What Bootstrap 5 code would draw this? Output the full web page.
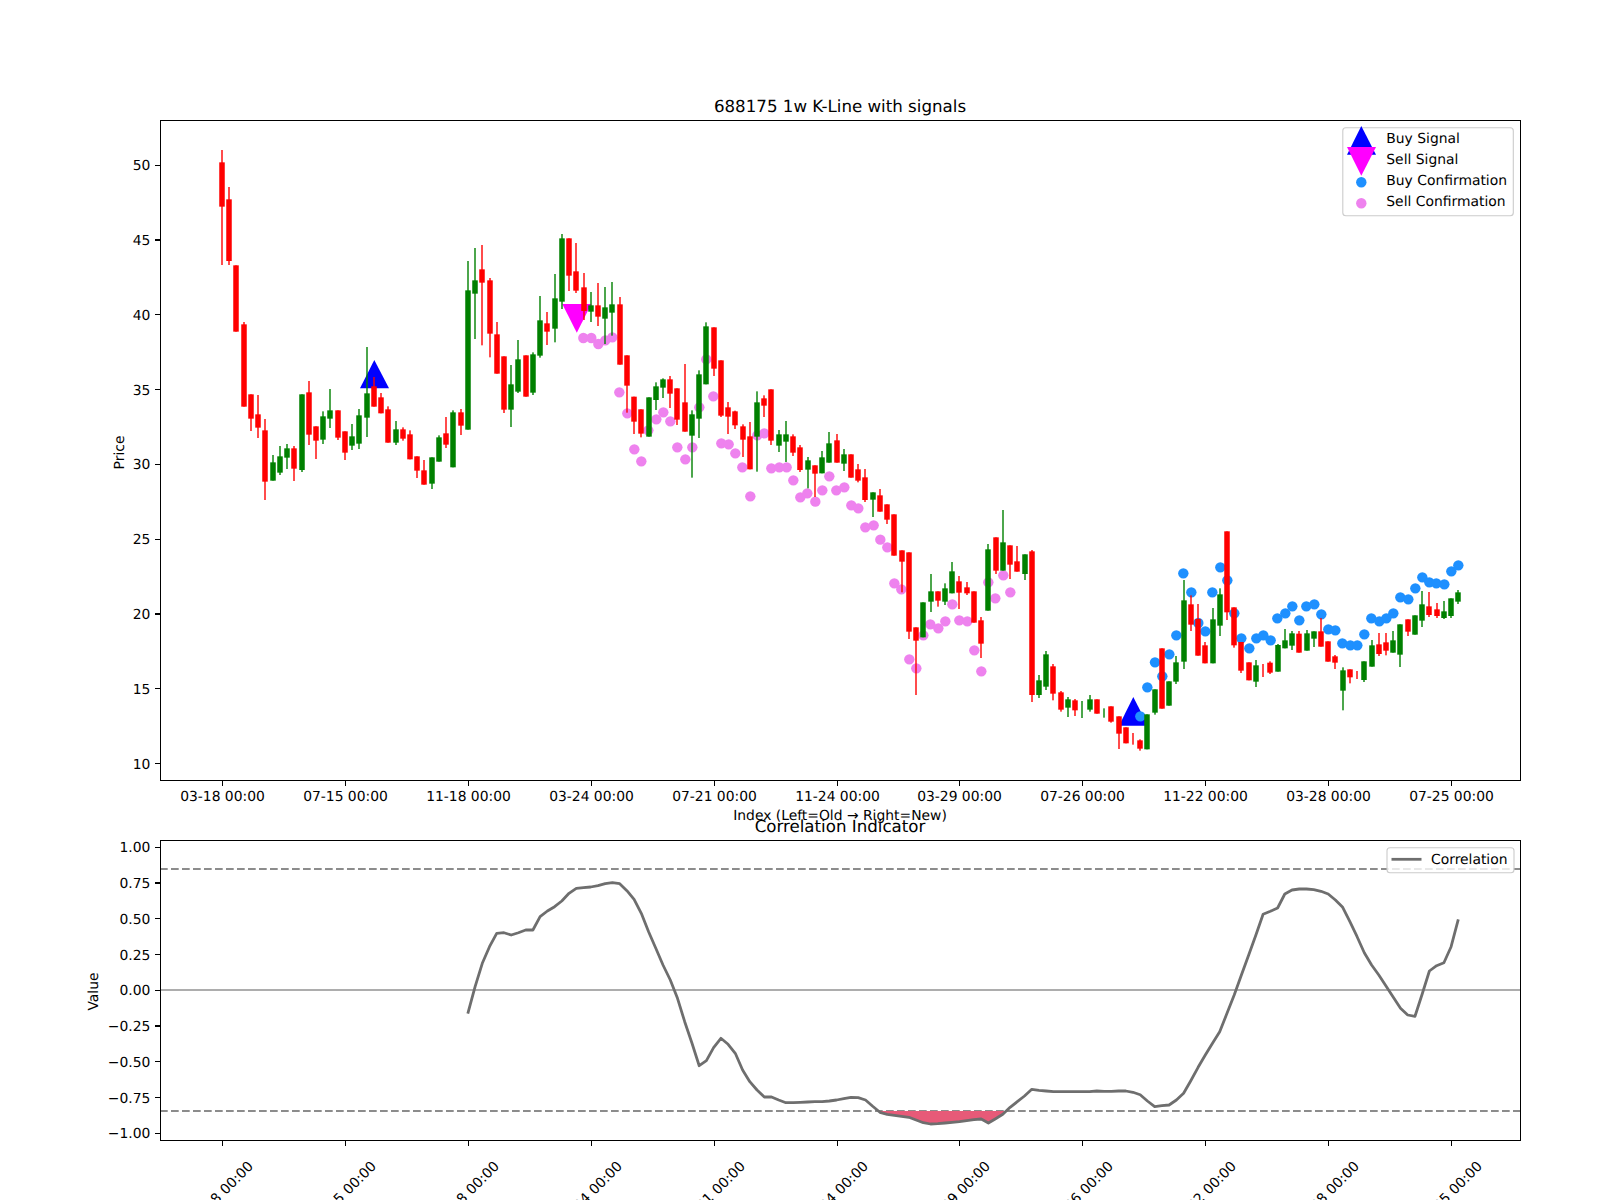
<!DOCTYPE html>
<html lang="en">
<head>
<meta charset="utf-8">
<title>688175 1w K-Line with signals</title>
<link href="https://cdn.jsdelivr.net/npm/bootstrap@5.3.0/dist/css/bootstrap.min.css" rel="stylesheet">
<style>
html,body{background:#fff;overflow:hidden}
.figure-sheet{width:1600px;height:1200px}
.figure-sheet svg{display:block}
.figure-sheet text{text-rendering:geometricPrecision}
.plot-text{font-family:"DejaVu Sans","Liberation Sans",sans-serif;font-size:13.89px;fill:#000}
.plot-title{font-family:"DejaVu Sans","Liberation Sans",sans-serif;font-size:16.67px;fill:#000}
.plot-frame{fill:none;stroke:#000;stroke-width:1.11;shape-rendering:crispEdges}
.plot-tick{stroke:#000;stroke-width:1.11;shape-rendering:crispEdges}
.legend-box{fill:#fff;fill-opacity:.8;stroke:#ccc;stroke-width:1.11}
.corr-line{fill:none;stroke:#6e6e6e;stroke-width:2.78;stroke-linejoin:round}
.corr-fill{fill:#e75a78}
.level-line{stroke:#8c8c8c;stroke-width:2.08;stroke-dasharray:7.7 3.3}
.zero-line{stroke:#adadad;stroke-width:2.08}
</style>
</head>
<body class="m-0 bg-white">
<main class="figure-sheet d-flex">
<svg id="chart" width="1600" height="1200" viewBox="0 0 1600 1200" xmlns="http://www.w3.org/2000/svg">
  <text class="plot-title" x="840" y="111.7" text-anchor="middle">688175 1w K-Line with signals</text>
  <polygon fill="#0000ff" points="374.3,360 360,388.3 389,388.3"/>
  <polygon fill="#0000ff" points="1133.3,697 1119,725.7 1148,725.7"/>
  <polygon fill="#ff00ff" points="562.3,304 591.3,304 576.8,332.7"/>
  <g id="dots"></g>
  <g id="bars"></g>
  <rect class="plot-frame" x="160.5" y="120.5" width="1360" height="660"/>
  <g id="topAxis"></g>
  <text class="plot-text" x="840" y="820" text-anchor="middle">Index (Left=Old → Right=New)</text>
  <text class="plot-text" text-anchor="middle" transform="translate(124,452.5) rotate(-90)">Price</text>

  <rect class="legend-box" x="1342.8" y="127.8" width="170.5" height="88" rx="3"/>
  <polygon fill="#0000ff" points="1361.3,126 1347,154.7 1376,154.7"/>
  <polygon fill="#ff00ff" points="1347,147 1376,147 1361.3,175.7"/>
  <circle cx="1361.3" cy="182.3" r="5.2" fill="#1e90ff"/>
  <circle cx="1361.3" cy="203.3" r="5.2" fill="#ee82ee"/>
  <text class="plot-text" x="1386.3" y="143.3">Buy Signal</text>
  <text class="plot-text" x="1386.3" y="164.2">Sell Signal</text>
  <text class="plot-text" x="1386.3" y="185.2">Buy Confirmation</text>
  <text class="plot-text" x="1386.3" y="206">Sell Confirmation</text>

  <text class="plot-title" x="840" y="831.7" text-anchor="middle">Correlation Indicator</text>
  <line class="level-line" x1="160" x2="1520" y1="869" y2="869"/>
  <line class="level-line" x1="160" x2="1520" y1="1111" y2="1111"/>
  <line class="zero-line" x1="160" x2="1520" y1="990" y2="990"/>
  <polygon id="corrFill" class="corr-fill"/>
  <polyline id="corrLine" class="corr-line"/>
  <rect class="plot-frame" x="160.5" y="840.5" width="1360" height="300"/>
  <g id="lowAxis"></g>
  <text class="plot-text" text-anchor="middle" transform="translate(98,991.5) rotate(-90)">Value</text>
  <rect class="legend-box" x="1387" y="847.8" width="127" height="25" rx="3"/>
  <line x1="1391.5" x2="1421.5" y1="859.3" y2="859.3" stroke="#6e6e6e" stroke-width="2.78"/>
  <text class="plot-text" x="1431" y="864.4">Correlation</text>
</svg>
</main>
<script>
var NS='http://www.w3.org/2000/svg';
function el(p,n,a,t){var e=document.createElementNS(NS,n);for(var k in a)e.setAttribute(k,a[k]);if(t)e.textContent=t;p.appendChild(e);return e}
function X(i){return 222+7.23*i}
// [red?, wick top, body top, body bottom, wick bottom] read in crop coordinates
var groups=[
{y0:90,d:[[1,180,217,350,525],[1,291,328,513,525],[1,526,526,725,725],[1,696,703,950,950],[1,913,913,986,1023],[1,915,973,1013,1044],[1,987,1021,1175,1230],[0,1095,1117,1172,1172],[0,1068,1099,1148,1155],[0,1062,1075,1103,1137],[1,1068,1075,1136,1173],[0,913,913,1140,1146],[1,873,907,1034,1065],[1,1009,1009,1052,1107],[0,964,979,1049,1062],[0,897,961,986,1014],[1,961,961,1043,1050],[1,1024,1024,1088,1110],[0,1002,1039,1067,1080],[0,957,976,1061,1077],[0,771,910,983,1041],[1,861,889,950,950],[1,909,922,970,970],[1,949,958,1058,1058],[0,993,1018,1058,1065],[1,1012,1018,1046,1052],[1,1021,1033,1108,1108],[1,1099,1099,1142,1164],[1,1110,1141,1184,1184],[0,1102,1102,1181,1197],[0,1036,1042,1115,1115],[1,981,1030,1064,1074],[0,961,967,1132,1132],[1,957,967,1007,1035],[0,513,601,1019,1019],[0,474,571,611,747],[1,465,538,578,766],[1,564,571,731,802],[1,696,733,851,851],[1,799,799,959,969],[0,825,883,959,1011],[0,750,808,905,909],[1,796,796,920,920],[0,787,793,908,915],[0,618,691,797,803],[1,666,700,725,765],[0,552,625,716,757],[0,432,445,635,657],[1,445,445,557,603],[1,459,544,602,609],[1,549,592,663,690],[0,606,646,665,696],[1,579,646,680,708],[0,591,652,686,762],[0,576,643,668,737],[1,621,643,824,824]]},
{y0:220,d:[[1,406,406,497,578],[1,530,530,605,642],[1,568,568,641,652],[0,532,532,650,650],[0,487,499,540,570],[0,475,478,503,534],[1,468,478,521,564],[1,505,505,599,615],[1,432,547,635,635],[0,571,583,647,773],[0,451,463,596,654],[0,307,319,493,493],[1,322,322,446,468],[1,421,421,587,591],[1,546,562,590,642],[1,572,574,616,627],[1,613,619,659,711],[1,606,649,748,748],[0,514,547,650,755],[1,526,535,557,591],[1,508,508,662,675],[0,630,643,677,696],[0,603,643,665,726],[1,643,649,698,708],[1,675,682,750,756],[0,711,721,749,805],[1,736,736,761,831],[0,693,712,760,760],[0,636,670,728,728],[1,642,661,728,728]]},
{y0:440,d:[[0,27,43,71,93],[1,43,43,113,113],[1,72,88,122,127],[1,87,112,180,186],[0,157,157,179,231],[1,147,166,215,215],[1,193,193,239,252],[1,223,223,347,347],[1,331,331,365,457],[1,337,337,575,597],[1,562,562,602,765],[0,487,487,592,592],[0,402,454,485,516],[1,454,454,482,500],[0,430,445,485,495],[0,366,394,460,460],[1,408,424,458,507],[1,426,442,460,465],[1,454,454,548,548],[1,531,541,611,654],[0,312,328,512,512],[1,292,292,392,402],[0,210,307,392,392],[1,316,316,374,417],[1,318,364,395,395],[0,343,343,402,420],[1,330,334,765,786],[0,705,721,765,774],[0,633,643,740,750],[1,672,679,761,781],[1,753,757,809,815],[0,771,778,803,831],[1,777,781,811,828],[0,783,0,0,834],[0,765,778,809,815],[1,778,778,821,821]]},
{y0:500,d:[[0,625,0,0,653],[1,619,619,665,668],[1,649,649,701,747],[1,682,682,730,730],[1,699,0,0,734],[1,718,721,746,752],[0,643,643,748,748],[0,568,568,638,644],[1,445,445,626,626],[0,544,544,617,617],[0,468,487,545,552],[0,240,301,485,507],[1,286,313,374,393],[1,312,357,467,467],[1,426,436,490,490],[0,324,358,490,490],[0,265,283,377,408],[1,94,94,337,360],[1,322,322,436,443],[1,426,426,512,519],[1,487,487,541,541],[0,480,496,545,561],[1,492,0,0,531],[1,484,488,518,522],[0,432,435,515,515],[0,387,421,445,445],[0,393,400,437,450],[1,393,401,458,458],[0,390,400,452,452],[0,394,394,416,441],[1,354,394,440,440],[1,424,424,485,485],[1,465,469,488,507],[0,502,511,572,631],[1,508,508,532,550],[1,513,0,0,537],[0,484,484,540,546],[0,420,436,500,500],[1,399,433,462,468],[1,399,427,452,466],[0,393,421,458,458],[0,373,373,464,501],[1,358,358,395,408],[0,346,346,404,404],[0,273,313,362,381],[1,276,319,345,351],[1,309,328,348,354],[0,303,334,354,357],[0,295,295,348,354],[0,270,277,305,312]]}
];
var bars=document.getElementById('bars'),idx=0;
groups.forEach(function(g){g.d.forEach(function(b){
  var c=Math.round(X(idx)),f=b[0]?'#ff0000':'#008000',Y=function(z){return g.y0+z/3};
  el(bars,'rect',{x:c-.7,y:Y(b[1]),width:1.4,height:Y(b[4])-Y(b[1]),fill:f});
  if(b[2]!==b[3])el(bars,'rect',{x:c-2.75,y:Y(b[2]),width:5.5,height:Y(b[3])-Y(b[2]),fill:f});
  idx++;
})});
// confirmation markers
var pink2=[[130,354],[154,354],[175,372],[196,361],[217,352],[238,517],[262,580],[283,688],[304,724],[325,631],[349,598],[370,577],[391,604],[412,682],[436,718],[457,682],[478,562],[499,418],[520,529],[544,670],[566,673],[586,700],[607,742],[631,829],[652,646],[673,640],[694,745],[718,742],[740,742],[760,781],[781,832],[802,820],[826,845],[847,811],[868,769],[889,811],[913,802],[934,856],[955,865],[976,922],[1001,916],[1021,959],[1042,982],[1063,1090],[1084,1108]];
var pink3=[[208,658],[229,685],[250,586],[271,553],[295,565],[316,544],[337,493],[358,541],[382,544],[403,631],[424,694],[445,427],[466,475],[490,406],[511,457]];
var blue4=[[121,649],[142,562],[165,487],[187,529],[208,463],[229,406],[250,220],[274,277],[295,369],[316,394],[337,277],[361,202],[382,241],[403,340],[424,415],[448,445],[469,415],[490,406],[512,421],[532,355],[556,340],[577,319],[598,361],[619,319],[643,313],[664,343],[685,388],[706,391],[727,430],[751,436],[772,436],[793,403],[814,355],[838,364],[859,355],[880,340],[901,292],[925,298],[946,265],[967,232],[988,247],[1009,250],[1033,253],[1054,214],[1075,196]];
var dots=document.getElementById('dots');
function put(list,x0,y0,col){list.forEach(function(p){el(dots,'circle',{cx:x0+p[0]/3,cy:y0+p[1]/3,r:5.2,fill:col})})}
put(pink2,540,220,'#ee82ee');put(pink3,840,440,'#ee82ee');put(blue4,1100,500,'#1e90ff');
// axes
var labels=['03-18','07-15','11-18','03-24','07-21','11-24','03-29','07-26','11-22','03-28','07-25'];
var ta=document.getElementById('topAxis'),la=document.getElementById('lowAxis');
labels.forEach(function(t,k){
  var x=Math.round(X(17*k))+.5;
  el(ta,'line',{'class':'plot-tick',x1:x,x2:x,y1:781,y2:786});
  el(ta,'text',{'class':'plot-text',x:x,y:801,'text-anchor':'middle'},t+' 00:00');
  el(la,'line',{'class':'plot-tick',x1:x,x2:x,y1:1141,y2:1146});
  el(la,'text',{'class':'plot-text','text-anchor':'middle',y:5,transform:'translate('+(x-2)+',1193.5) rotate(-45)'},t+' 00:00');
});
[50,45,40,35,30,25,20,15,10].forEach(function(v){
  var y=763.6-14.96*(v-10);
  el(ta,'line',{'class':'plot-tick',x1:155,x2:160,y1:y,y2:y});
  el(ta,'text',{'class':'plot-text',x:150.3,y:y+5,'text-anchor':'end'},String(v));
});
[1,.75,.5,.25,0,-.25,-.5,-.75,-1].forEach(function(v){
  var y=990.3-143*v,s=Math.abs(v).toFixed(2);
  el(la,'line',{'class':'plot-tick',x1:155,x2:160,y1:y,y2:y});
  el(la,'text',{'class':'plot-text',x:150.3,y:y+5,'text-anchor':'end'},(v<0?'\u2212':'')+s);
});
// correlation: crop y values per bar, first from index 34, then from index 78
var c1=[731,650,580,530,490,488,495,488,480,480,440,423,410,393,370,355,353,351,347,341,338,341,362,388,430,485,535,585,630,685,755,820,887,872,833,805,823,850,900,935,960,981,981,990];
var c2=[998,998,997,996,995,995,993,990,986,982,983,990,1009,1027,1033,1036,1039,1042,1050,1058,1062,1061,1059,1057,1055,1052,1049,1047,1059,1046,1033,1012,995,978,958,961,963,965,965,965,965,965,965,963,964,964,963,963,967,974,993,1010,1007,1005,990,970,932,892,855,820,785,730,675,615,555,495,433,424,414,372,360,357,357,359,364,372,390,412,455,500,548,585,615,648,682,715,735,739,672,603,587,578,530,448];
var pts=c1.concat(c2).map(function(z,n){return [X(34+n),770+z/3]});
document.getElementById('corrLine').setAttribute('points',pts.map(function(p){return p[0].toFixed(1)+','+p[1].toFixed(1)}).join(' '));
var lvl=1111,fp=[];
for(var n=1;n<pts.length;n++){var a=pts[n-1],b=pts[n];
  if((a[1]-lvl)*(b[1]-lvl)<0){var t=(lvl-a[1])/(b[1]-a[1]);fp.push([a[0]+t*(b[0]-a[0]),lvl])}
  if(b[1]>lvl)fp.push(b)}
document.getElementById('corrFill').setAttribute('points',fp.map(function(p){return p[0].toFixed(1)+','+p[1].toFixed(1)}).join(' '));
</script>
<script src="https://cdn.jsdelivr.net/npm/bootstrap@5.3.0/dist/js/bootstrap.bundle.min.js"></script>
</body>
</html>
